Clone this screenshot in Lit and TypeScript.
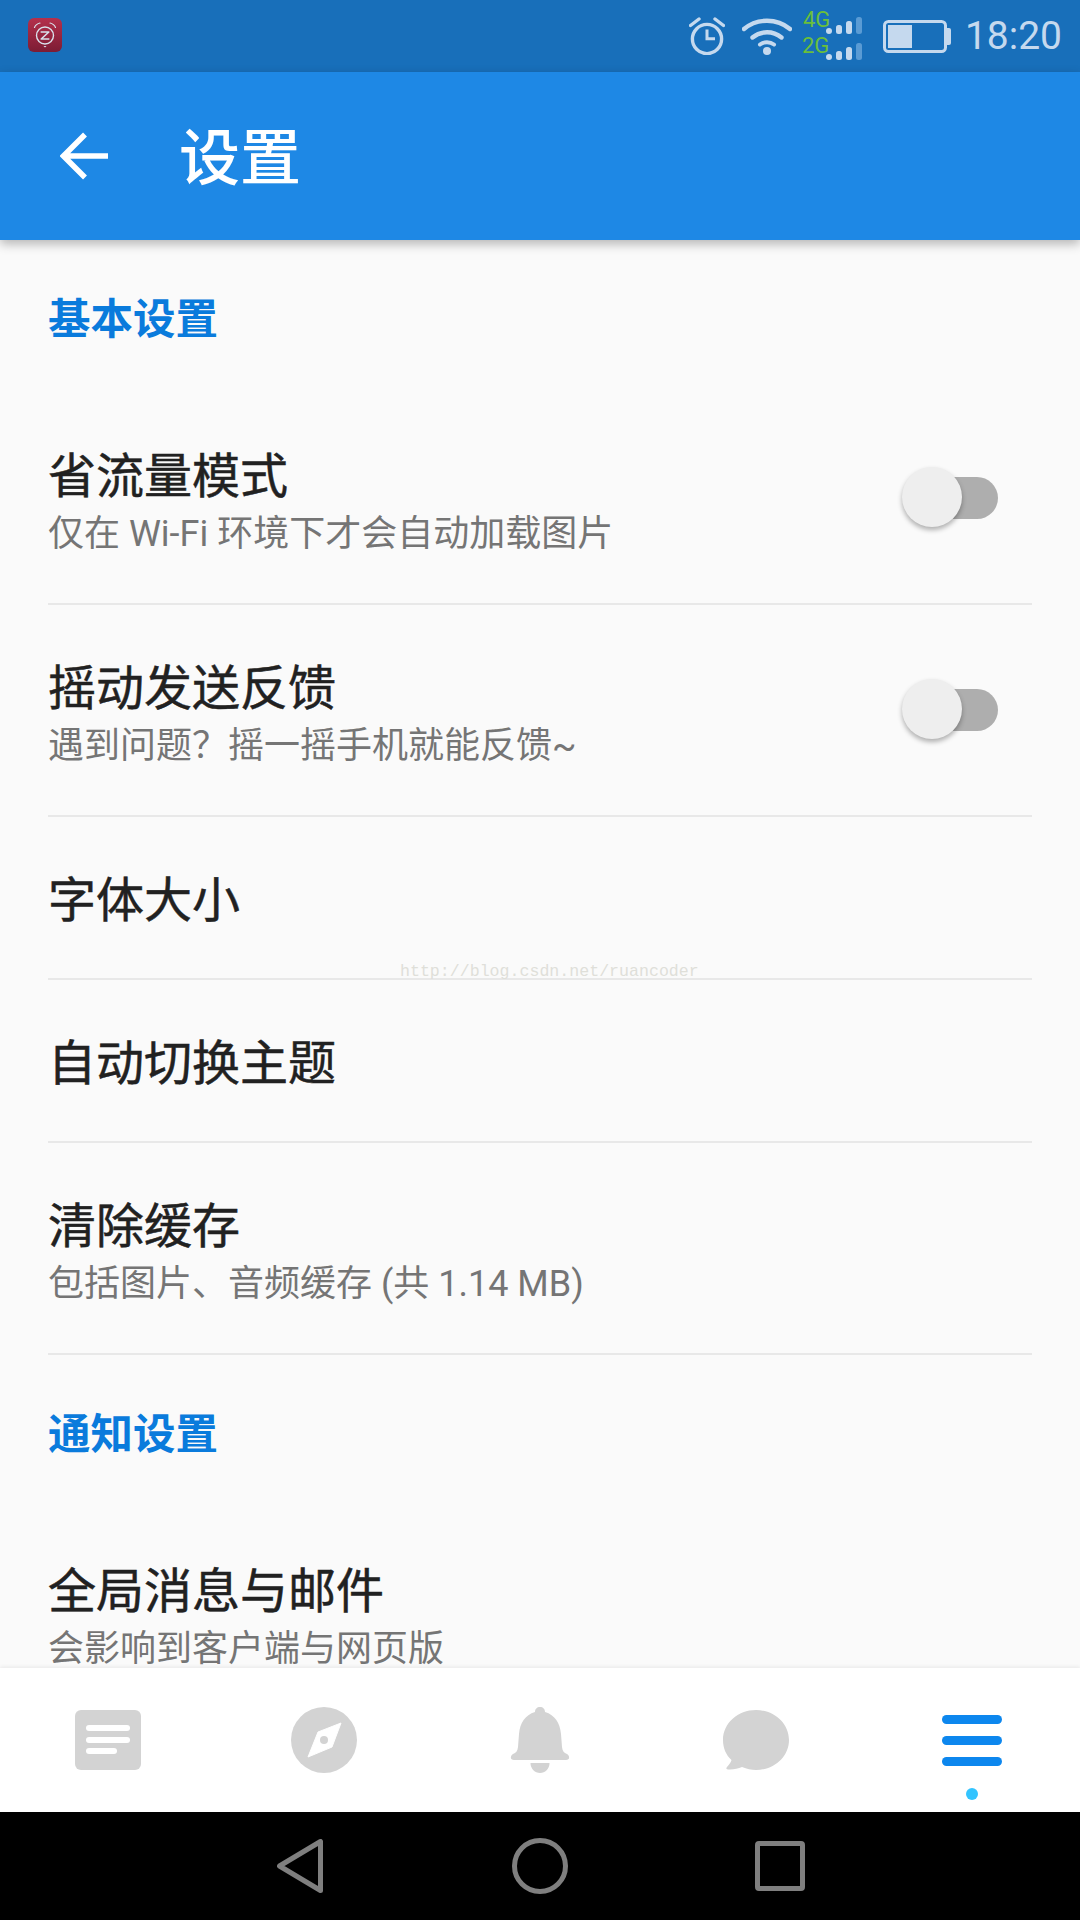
import { LitElement, html, css, svg } from 'lit';
import { customElement } from 'lit/decorators.js';

type Row = { title: string; sub?: string; toggle?: boolean };
type Section = { name: string; rows: Row[] };

const SECTIONS: Section[] = [
  {
    name: '基本设置',
    rows: [
      { title: '省流量模式', sub: '仅在 Wi-Fi 环境下才会自动加载图片', toggle: true },
      { title: '摇动发送反馈', sub: '遇到问题？摇一摇手机就能反馈~', toggle: true },
      { title: '字体大小' },
      { title: '自动切换主题' },
      { title: '清除缓存', sub: '包括图片、音频缓存 (共 1.14 MB)' },
    ],
  },
  {
    name: '通知设置',
    rows: [{ title: '全局消息与邮件', sub: '会影响到客户端与网页版' }],
  },
];

const signalBars = (bottom: number) => svg`
  <rect x="23" y=${bottom - 6} width="6" height="6" rx="3" fill="#c5d9ee" />
  <rect x="33" y=${bottom - 9} width="6" height="9" rx="2.5" fill="#c5d9ee" />
  <rect x="43" y=${bottom - 13} width="6" height="13" rx="2.5" fill="#c5d9ee" />
  <rect x="53" y=${bottom - 17} width="6" height="17" rx="2.5" fill="#5a9bd4" />
`;

@customElement('app-root')
export class AppRoot extends LitElement {
  static styles = css`
    :host {
      display: flex;
      flex-direction: column;
      position: relative;
      width: 1080px;
      height: 1920px;
      overflow: hidden;
      background: #fafafa;
      font-family: Roboto, 'Noto Sans CJK SC', sans-serif;
    }

    .status {
      flex: none;
      height: 72px;
      display: flex;
      align-items: center;
      background: #186fba;
      padding: 0 18px 0 28px;
    }
    .app-icon {
      width: 34px;
      height: 34px;
      margin-top: -2px;
      border-radius: 6px;
      background: linear-gradient(#b4304c, #7c1c34);
      display: block;
    }
    .status-right {
      margin-left: auto;
      display: flex;
      align-items: center;
    }
    .status-right svg {
      display: block;
      flex: none;
    }
    .alarm {
      margin-right: 17px;
    }
    .wifi {
      margin-right: 11px;
    }
    .signal {
      margin-right: 20px;
    }
    .clock {
      margin-left: 14px;
      font-size: 39px;
      font-weight: 400;
      line-height: 72px;
      color: #c5d9ee;
    }

    .appbar {
      flex: none;
      position: relative;
      z-index: 2;
      height: 168px;
      display: flex;
      align-items: center;
      background: #1e88e5;
      box-shadow: 0 4px 10px rgba(0, 0, 0, 0.28);
      padding-left: 60px;
    }
    .appbar svg {
      display: block;
      flex: none;
    }
    .appbar h1 {
      margin: 6px 0 0 71px;
      font-size: 61px;
      font-weight: 500;
      line-height: 84px;
      color: #fff;
    }

    .content {
      flex: 1;
      min-height: 0;
      overflow: hidden;
      position: relative;
    }
    .section-name {
      margin: 0;
      padding: 50px 48px 43px;
      font-size: 42.500px;
      font-weight: 700;
      line-height: 60px;
      color: #0a7bdc;
    }
    .row {
      margin: 0 48px;
      display: flex;
      align-items: center;
      justify-content: space-between;
      border-bottom: 2px solid #e8e8e8;
    }
    .row-text {
      padding: 54px 0 47px;
    }
    .row-text.has-sub {
      padding-bottom: 42px;
    }
    .row-title {
      font-size: 48px;
      line-height: 60px;
      color: #212121;
      -webkit-text-stroke: 0.5px #212121;
    }
    .row-sub {
      font-size: 36px;
      line-height: 54px;
      color: #757575;
    }
    .toggle {
      position: relative;
      width: 84px;
      height: 42px;
      margin-right: 34px;
      border-radius: 21px;
      background: #aeaeae;
    }
    .toggle::after {
      content: '';
      position: absolute;
      left: -12px;
      top: -10px;
      width: 60px;
      height: 60px;
      border-radius: 50%;
      background: #eeeeee;
      box-shadow: 0 3px 5px rgba(0, 0, 0, 0.3);
    }
    .watermark {
      position: absolute;
      left: 400px;
      top: 960px;
      font-family: 'Liberation Mono', monospace;
      font-size: 16.6px;
      line-height: 24px;
      color: #dfdfd9;
      white-space: nowrap;
    }

    .tabs {
      flex: none;
      position: relative;
      z-index: 1;
      height: 144px;
      display: flex;
      background: #fff;
      box-shadow: 0 -1px 4px rgba(0, 0, 0, 0.08);
    }
    .tab {
      flex: 1;
      position: relative;
      display: flex;
      justify-content: center;
      align-items: center;
    }
    .tab svg {
      display: block;
    }
    .menu-icon {
      margin-top: 1px;
    }
    .dot {
      position: absolute;
      left: 102px;
      top: 120px;
      width: 12px;
      height: 12px;
      border-radius: 50%;
      background: #33c4ff;
    }

    .navbar {
      flex: none;
      height: 108px;
      background: #000;
      display: flex;
      align-items: center;
      padding-left: 277px;
    }
    .navbar svg {
      display: block;
      flex: none;
    }
    .nav-back {
      margin-right: 189px;
    }
    .nav-home {
      margin-right: 187px;
    }
  `;

  private renderStatus() {
    return html`
      <div class="status">
        <svg class="app-icon" viewBox="0 0 34 34">
          <g fill="none" stroke="#d9e0ea" stroke-linecap="round">
            <circle cx="17" cy="17.5" r="8.5" stroke-width="1.4" />
            <path d="M6.500 9.500 C7.500 7 9.500 5.500 12 5 M27.500 9.500 C26.500 7 24.500 5.500 22 5" stroke-width="1.2" />
            <path d="M13.200 14 H20.800 L13.200 21 H20.800" stroke-width="1.600" stroke-linejoin="round" />
          </g>
          <path d="M15.500 28 H18.500 L17 29.600 Z" fill="#d9e0ea" />
        </svg>
        <div class="status-right">
          <svg class="alarm" width="36" height="38" viewBox="0 0 36 38" fill="none" stroke="#c5d9ee">
            <circle cx="18" cy="22" r="14.600" stroke-width="3.400" />
            <path d="M18 12.500 V21.800 H26" stroke-width="3" />
            <path d="M1.500 8.500 L10 2 M34.500 8.500 L26 2" stroke-width="3.400" stroke-linecap="round" />
          </svg>
          <svg class="wifi" width="50" height="38" viewBox="0 0 50 38" fill="none" stroke="#c5d9ee" stroke-linecap="round">
            <path d="M2 12 C15 1 35 1 48 12" stroke-width="4.400" />
            <path d="M10.500 20.500 C19 13.500 31 13.500 39.500 20.500" stroke-width="4.400" />
            <path d="M18 27.500 C22 24.500 28 24.500 32 27.500" stroke-width="4" />
            <circle cx="25" cy="34" r="4" fill="#c5d9ee" stroke="none" />
          </svg>
          <svg class="signal" width="60" height="60" viewBox="0 0 60 60">
            <text x="0" y="21" font-size="22" fill="#6abf3a" font-family="Roboto">4G</text>
            <text x="-1" y="47" font-size="22" fill="#6abf3a" font-family="Roboto">2G</text>
            ${signalBars(28)}${signalBars(54)}
          </svg>
          <svg width="68" height="33" viewBox="0 0 68 33">
            <rect x="1.500" y="1.500" width="61" height="30" rx="4" fill="none" stroke="#c5d9ee" stroke-width="3" />
            <rect x="5" y="5" width="24" height="23" fill="#c5d9ee" />
            <path d="M64 8 H66 Q68 8 68 10 V23 Q68 25 66 25 H64 Z" fill="#c5d9ee" />
          </svg>
          <span class="clock">18:20</span>
        </div>
      </div>
    `;
  }

  private renderRow(row: Row) {
    return html`
      <div class="row">
        <div class="row-text ${row.sub ? 'has-sub' : ''}">
          <div class="row-title">${row.title}</div>
          ${row.sub ? html`<div class="row-sub">${row.sub}</div>` : ''}
        </div>
        ${row.toggle ? html`<div class="toggle"></div>` : ''}
      </div>
    `;
  }

  private renderTabs() {
    return html`
      <div class="tabs">
        <div class="tab">
          <svg width="66" height="60" viewBox="0 0 66 60">
            <rect width="66" height="60" rx="6" fill="#d3d3d3" />
            <rect x="11" y="15" width="44" height="6" rx="3" fill="#fff" />
            <rect x="11" y="27" width="44" height="6" rx="3" fill="#fff" />
            <rect x="11" y="38" width="31" height="6" rx="3" fill="#fff" />
          </svg>
        </div>
        <div class="tab">
          <svg width="66" height="66" viewBox="0 0 66 66">
            <circle cx="33" cy="33" r="33" fill="#d3d3d3" />
            <path d="M50 16 L41 40 L17 50 L27 25 Z" fill="#fff" stroke="#fff" stroke-width="1" stroke-linejoin="round" />
            <circle cx="33" cy="33" r="4" fill="#d3d3d3" />
          </svg>
        </div>
        <div class="tab">
          <svg width="60" height="66" viewBox="0 0 60 66">
            <path
              d="M30 0 C33 0 35 2 35 5 C45 8 50 16 51 27 L52 40 C52.500 44 54 46 57 47 C60 49 60 53 56 53 L4 53 C0 53 0 49 3 47 C6 46 7.500 44 8 40 L9 27 C10 16 15 8 25 5 C25 2 27 0 30 0 Z"
              fill="#d3d3d3"
            />
            <path d="M20.500 56 H39.500 C39.500 62 35 66 30 66 C25 66 20.500 62 20.500 56 Z" fill="#d3d3d3" />
          </svg>
        </div>
        <div class="tab">
          <svg width="66" height="60" viewBox="0 0 66 60">
            <path
              d="M33 0 C51 0 66 13 66 30 C66 47 51 60 33 60 C28 60 24 59 19 57 C15 58.500 10 60 5 59.500 C3 59.500 3 58 4 57 C6 55 8 52 8.500 50 C3 45 0 38 0 30 C0 13 15 0 33 0 Z"
              fill="#d3d3d3"
            />
          </svg>
        </div>
        <div class="tab">
          <svg class="menu-icon" width="60" height="51" viewBox="0 0 60 51">
            <rect width="60" height="9" rx="4.500" fill="#0d87ee" />
            <rect y="21" width="60" height="9" rx="4.500" fill="#0d87ee" />
            <rect y="42" width="60" height="9" rx="4.500" fill="#0d87ee" />
          </svg>
          <span class="dot"></span>
        </div>
      </div>
    `;
  }

  render() {
    return html`
      ${this.renderStatus()}
      <div class="appbar">
        <svg width="48" height="48" viewBox="0 0 48 48" fill="none" stroke="#fff" stroke-width="5.500">
          <path d="M48 24 H4 M25 2.500 L3.500 24 L25 45.500" />
        </svg>
        <h1>设置</h1>
      </div>
      <div class="content">
        ${SECTIONS.map(
          (s) => html`
            <h2 class="section-name">${s.name}</h2>
            ${s.rows.map((r) => this.renderRow(r))}
          `
        )}
      </div>
      ${this.renderTabs()}
      <div class="navbar">
        <svg class="nav-back" width="46" height="54" viewBox="0 0 46 54" fill="none" stroke="#7f7f7f" stroke-width="5" stroke-linejoin="round">
          <path d="M43.500 2.500 V51.500 L2.500 27 Z" />
        </svg>
        <svg class="nav-home" width="56" height="56" viewBox="0 0 56 56" fill="none" stroke="#7f7f7f" stroke-width="5">
          <circle cx="28" cy="28" r="25.500" />
        </svg>
        <svg width="50" height="50" viewBox="0 0 50 50" fill="none" stroke="#7f7f7f" stroke-width="5">
          <rect x="2.500" y="2.500" width="45" height="45" rx="1.500" />
        </svg>
      </div>
      <div class="watermark">http://blog.csdn.net/ruancoder</div>
    `;
  }
}
